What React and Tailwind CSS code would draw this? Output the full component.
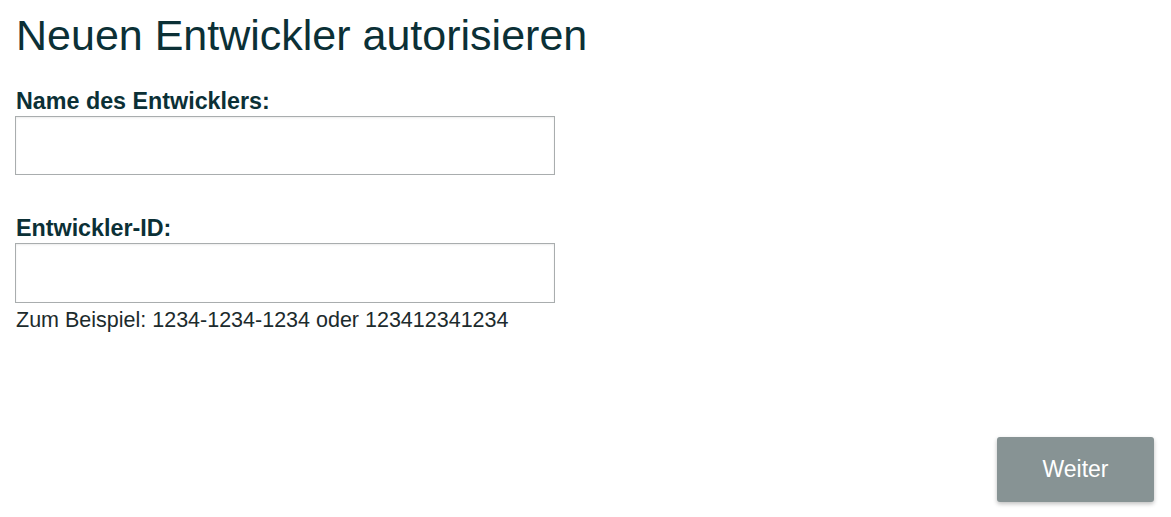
const App = () => {
  return (
    <div className="w-[1171px] h-[517px] bg-white flex flex-col px-[15px] font-['Liberation_Sans',Arial,sans-serif] text-[#0b3036]">
      <h1 className="text-[43px] leading-none pt-[14px] ml-px">Neuen Entwickler autorisieren</h1>
      <form className="flex flex-col mt-[32px] w-[540px]">
        <label className="text-[23.3px] font-bold leading-6 ml-px">Name des Entwicklers:</label>
        <input
          type="text"
          className="mt-[3px] h-[59px] w-full border border-[#a9adae] bg-white shadow-[inset_0_1px_2px_rgba(0,0,0,0.08)] outline-none"
        />
        <label className="text-[23.3px] font-bold leading-6 ml-px mt-[41px]">Entwickler-ID:</label>
        <input
          type="text"
          className="mt-[3px] h-[60px] w-full border border-[#a9adae] bg-white shadow-[inset_0_1px_2px_rgba(0,0,0,0.08)] outline-none"
        />
        <p className="text-[21.5px] leading-6 mt-[5px] ml-px text-[#1c2b2d]">Zum Beispiel: 1234-1234-1234 oder 123412341234</p>
      </form>
      <div className="flex justify-end mt-auto mb-[15px] mr-[2px]">
        <button className="w-[157px] h-[65px] bg-[#879394] text-white text-[23px] rounded-[3px] shadow-[0_2px_4px_rgba(0,0,0,0.25)]">
          Weiter
        </button>
      </div>
    </div>
  );
};

export default App;
